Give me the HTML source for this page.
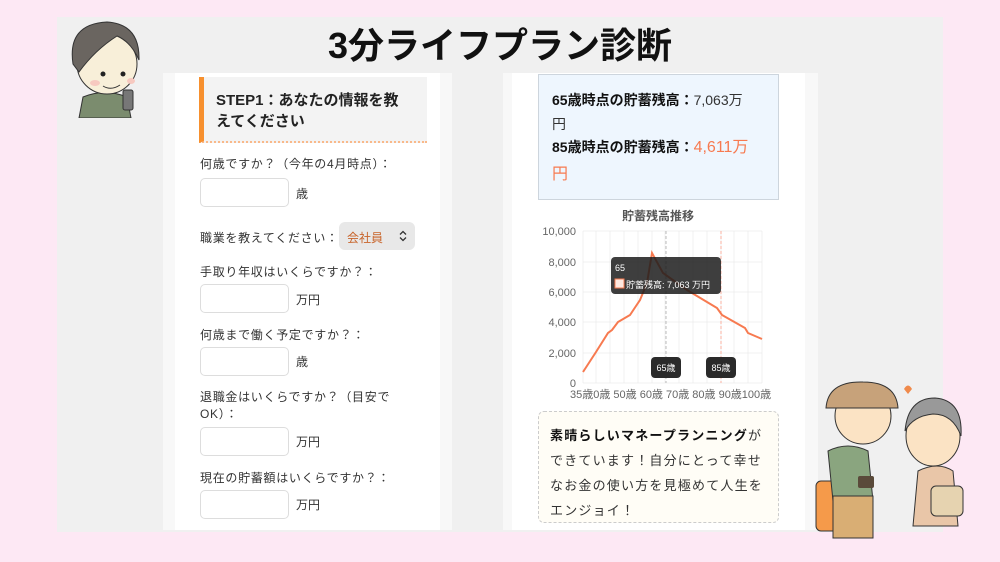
<!DOCTYPE html>
<html><head><meta charset="utf-8"><style>
*{margin:0;padding:0;box-sizing:border-box}
body{width:1000px;height:562px;background:#fde8f4;position:relative;overflow:hidden;font-family:"Liberation Sans","Noto Sans CJK JP",sans-serif;color:#333}
.a{position:absolute}
.lbl{position:absolute;font-size:12px;color:#333;letter-spacing:0.7px;white-space:nowrap}
.inp{position:absolute;left:200px;width:89px;height:29px;border:1px solid #ddd;border-radius:5px;background:#fff}
.unit{position:absolute;left:296px;font-size:12px}
</style></head><body>
<div class="a" style="left:57px;top:17px;width:886px;height:515px;background:#f0f0f0"></div>
<div class="a" style="left:0;top:17px;width:1000px;text-align:center;font-size:36px;font-weight:bold;color:#111">3分ライフプラン診断</div>
<!-- left card -->
<div class="a" style="left:163px;top:73px;width:289px;height:457px;background:#f8f8f8"></div>
<div class="a" style="left:175px;top:73px;width:265px;height:457px;background:#fff"></div>
<div class="a" style="left:199px;top:77px;width:228px;height:66px;background:#f3f3f3;border-left:5px solid #f7902e;border-bottom:2px dotted #f9b98a"></div>
<div class="a" style="left:216px;top:90px;font-size:15px;font-weight:bold;line-height:21px;color:#222;white-space:nowrap">STEP1：あなたの情報を教<br>えてください</div>
<div class="lbl" style="left:200px;top:155px">何歳ですか？（今年の4月時点）：</div>
<div class="inp" style="top:178px"></div><div class="unit" style="top:185px">歳</div>
<div class="lbl" style="left:200px;top:229px">職業を教えてください：</div>
<div class="a" style="left:339px;top:222px;width:76px;height:28px;background:#e8e8e8;border-radius:6px;font-size:12px;color:#c8642a;padding:7px 0 0 8px">会社員<svg style="position:absolute;right:8px;top:8px" width="8" height="12" viewBox="0 0 8 12"><path d="M1 4.5L4 1.5L7 4.5M1 7.5L4 10.5L7 7.5" fill="none" stroke="#333" stroke-width="1.3"/></svg></div>
<div class="lbl" style="left:200px;top:263px">手取り年収はいくらですか？：</div>
<div class="inp" style="top:284px"></div><div class="unit" style="top:291px">万円</div>
<div class="lbl" style="left:200px;top:326px">何歳まで働く予定ですか？：</div>
<div class="inp" style="top:347px"></div><div class="unit" style="top:353px">歳</div>
<div class="lbl" style="left:200px;top:388px">退職金はいくらですか？（目安で</div>
<div class="lbl" style="left:200px;top:405px">OK）：</div>
<div class="inp" style="top:427px"></div><div class="unit" style="top:433px">万円</div>
<div class="lbl" style="left:200px;top:469px">現在の貯蓄額はいくらですか？：</div>
<div class="inp" style="top:490px"></div><div class="unit" style="top:496px">万円</div>
<!-- right card -->
<div class="a" style="left:503px;top:73px;width:315px;height:457px;background:#f8f8f8"></div>
<div class="a" style="left:512px;top:73px;width:293px;height:457px;background:#fff"></div>
<div class="a" style="left:538px;top:74px;width:241px;height:126px;background:#eef6fe;border:1px solid #cdd5dd"></div>
<div class="a" style="left:552px;top:88px;font-size:14px;line-height:24px;color:#333;white-space:nowrap"><b style="color:#111">65歳時点の貯蓄残高：</b>7,063万<br>円</div>
<div class="a" style="left:552px;top:134px;font-size:14px;line-height:26px;color:#333;white-space:nowrap"><b style="color:#111">85歳時点の貯蓄残高：</b><span style="color:#f77a50;font-size:16px">4,611万<br>円</span></div>
<svg class="a" style="left:512px;top:200px" width="293" height="205" viewBox="512 200 293 205">
<text x="658" y="220" font-size="12" font-weight="bold" fill="#555" text-anchor="middle" font-family="Liberation Sans,Noto Sans CJK JP,sans-serif">貯蓄残高推移</text>
<g stroke="#e6e6e6" stroke-width="0.6">
<path d="M583 231H762M583 262H762M583 292H762M583 322H762M583 353H762M583 383H762"/>
<path d="M583 231V383M596 231V383M610 231V383M624 231V383M638 231V383M652 231V383M665 231V383M679 231V383M693 231V383M707 231V383M721 231V383M734 231V383M748 231V383M762 231V383"/>
</g>
<g font-size="11" fill="#666" text-anchor="end" font-family="Liberation Sans,sans-serif">
<text x="576" y="235">10,000</text><text x="576" y="266">8,000</text><text x="576" y="296">6,000</text><text x="576" y="326">4,000</text><text x="576" y="357">2,000</text><text x="576" y="387">0</text></g>
<text x="570" y="398" font-size="11" fill="#666" font-family="Liberation Sans,Noto Sans CJK JP,sans-serif">35歳0歳 50歳 60歳 70歳 80歳 90歳100歳</text>
<path d="M666 231V383" stroke="#bbb" stroke-dasharray="3,2"/>
<path d="M721 231V383" stroke="#f9b0a0" stroke-dasharray="3,2"/>
<polyline fill="none" stroke="#f77a50" stroke-width="2" points="583,372 596,352 608,333 612,330 618,322 630,315 640,300 647,283 652,253 663,273 670,278 687,290 717,308 722,315 745,328 748,333 762,339"/>
<rect x="611" y="257" width="110" height="37" rx="4" fill="#1c1c1c" opacity="0.85"/>
<text x="615" y="271" font-size="9" fill="#fff" font-family="Liberation Sans,sans-serif">65</text>
<rect x="615" y="279" width="9" height="9" fill="#fde8e0" stroke="#f77a50"/>
<text x="626" y="288" font-size="9" fill="#fff" font-family="Liberation Sans,Noto Sans CJK JP,sans-serif">貯蓄残高: 7,063 万円</text>
<rect x="651" y="357" width="30" height="21" rx="4" fill="#2a2a2a"/><text x="666" y="371" font-size="9" fill="#fff" text-anchor="middle" font-family="Liberation Sans,Noto Sans CJK JP,sans-serif">65歳</text>
<rect x="706" y="357" width="30" height="21" rx="4" fill="#2a2a2a"/><text x="721" y="371" font-size="9" fill="#fff" text-anchor="middle" font-family="Liberation Sans,Noto Sans CJK JP,sans-serif">85歳</text>
</svg>
<div class="a" style="left:538px;top:411px;width:241px;height:112px;background:#fffdf6;border:1px dashed #ccc;border-radius:6px;padding:11px 0 0 11px;font-size:13px;line-height:25px;letter-spacing:1.2px;color:#333;white-space:nowrap">
<b style="color:#111">素晴らしいマネープランニング</b>が<br>できています！自分にとって幸せ<br>なお金の使い方を見極めて人生を<br>エンジョイ！</div>
<!-- man top-left -->
<svg class="a" style="left:65px;top:12px" width="80" height="106" viewBox="0 0 80 106">
<path d="M18 85 Q40 76 62 85 L66 106 H14Z" fill="#7b8c6e" stroke="#333"/>
<rect x="58" y="78" width="10" height="20" rx="2" fill="#777" stroke="#333"/>
<ellipse cx="42" cy="52" rx="30" ry="30" fill="#f8efd9" stroke="#333"/>
<path d="M8 52 Q2 12 42 10 Q75 12 74 48 Q66 30 52 24 Q30 38 14 60Z" fill="#6a6560" stroke="#333"/>
<circle cx="38" cy="62" r="2.5" fill="#222"/><circle cx="58" cy="62" r="2.5" fill="#222"/>
<path d="M38 74 Q46 79 55 73" stroke="#333" fill="none"/>
<ellipse cx="30" cy="71" rx="5" ry="3" fill="#f7c9c0"/><ellipse cx="66" cy="69" rx="4" ry="3" fill="#f7c9c0"/>
</svg>
<!-- couple bottom-right -->
<svg class="a" style="left:808px;top:376px" width="160" height="170" viewBox="0 0 160 170">
<rect x="8" y="105" width="28" height="50" rx="5" fill="#f59a4a" stroke="#333"/>
<path d="M20 75 Q40 65 60 75 L65 125 H25Z" fill="#8aa57f" stroke="#333"/>
<rect x="25" y="120" width="40" height="42" fill="#d9ae74" stroke="#333"/>
<ellipse cx="55" cy="40" rx="28" ry="28" fill="#fbe3c4" stroke="#333"/>
<path d="M18 32 Q20 5 55 6 Q88 6 90 32 Z" fill="#c7a27a" stroke="#333"/>
<rect x="50" y="100" width="16" height="12" rx="2" fill="#5a4a3a"/>
<path d="M110 95 Q130 85 145 95 L150 150 H105Z" fill="#e9c6a8" stroke="#333"/>
<ellipse cx="125" cy="60" rx="27" ry="30" fill="#fbe3c4" stroke="#333"/>
<path d="M97 55 Q100 22 127 22 Q155 24 153 60 Q145 38 125 38 Q105 40 97 55Z" fill="#999" stroke="#333"/>
<path d="M96 13 Q100 6 104 13 L100 18Z" fill="#f08a4b"/>
<rect x="123" y="110" width="32" height="30" rx="5" fill="#e6d3b0" stroke="#333"/>
</svg>
</body></html>
